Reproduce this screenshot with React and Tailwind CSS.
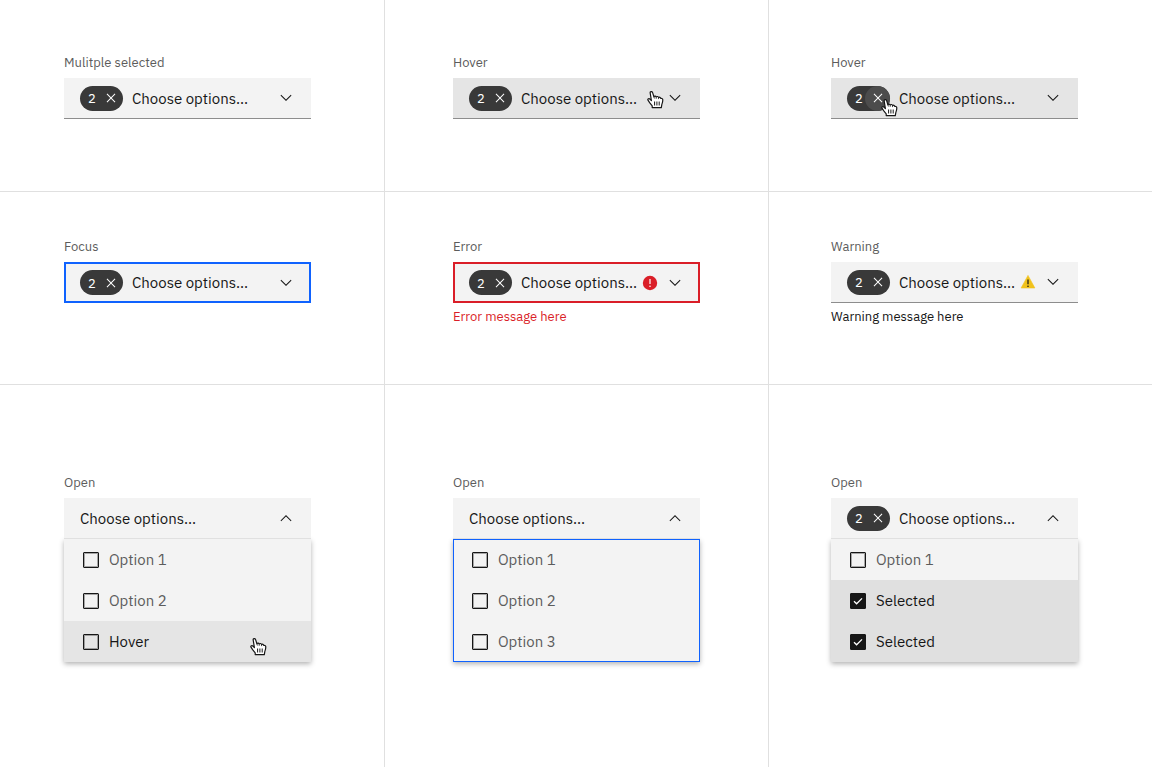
import { useId } from 'react'
import clsx from 'clsx'

const ChevronIcon = ({ up }) => (
  <svg viewBox="0 0 16 16" className={clsx('size-4 shrink-0 fill-[#161616]', up && 'rotate-180')} aria-hidden="true">
    <path d="M8 11 2.5 5.5l.7-.7L8 9.6l4.8-4.8.7.7z" />
  </svg>
)

const CloseIcon = () => (
  <svg viewBox="0 0 16 16" className="size-4 fill-white" aria-hidden="true">
    <path d="M12.4 4.3 11.7 3.6 8 7.3 4.3 3.6l-.7.7L7.3 8l-3.7 3.7.7.7L8 8.7l3.7 3.7.7-.7L8.7 8z" />
  </svg>
)

const ErrorIcon = () => (
  <svg viewBox="0 0 16 16" className="size-4 shrink-0" aria-hidden="true">
    <circle cx="8" cy="8" r="7.2" fill="#da1e28" />
    <path d="M7.4 4h1.2v5H7.4z" fill="#fff" />
    <circle cx="8" cy="11.2" r=".8" fill="#fff" />
  </svg>
)

const WarningIcon = () => (
  <svg viewBox="0 0 16 16" className="size-4 shrink-0" aria-hidden="true">
    <path d="M8 1.4 14.9 14H1.1z" fill="#f1c21b" stroke="#f1c21b" strokeWidth=".6" strokeLinejoin="round" />
    <path d="M7.4 5.6h1.2v4.6H7.4z" fill="#161616" />
    <circle cx="8" cy="12.2" r=".8" fill="#161616" />
  </svg>
)

const HandCursor = ({ className }) => (
  <svg viewBox="0 0 17 19" className={clsx('pointer-events-none absolute z-20 h-[19px] w-[17px]', className)} aria-hidden="true">
    <path
      d="M5.2 17.6v-1.8L2.6 12.6 1 10.2c-.6-1.1.5-2 1.5-1.4l1.9 1.7L3.2 3.2c-.4-1.8 1.8-2.3 2.4-.6l1.3 4.1c.5-.9 1.9-.8 2.3.2.7-.7 2-.5 2.3.5.8-.5 1.9 0 2.2 1 1.3-.4 2.1.4 2.1 1.6 0 2-.5 3.3-1 4.6l-.5 3z"
      fill="#fff" stroke="#161616" strokeWidth="1.2" strokeLinejoin="round"
    />
    <path d="M7.6 11.5v4M9.9 11.5v4M12.2 11.5v4" fill="none" stroke="#161616" strokeWidth="1" />
    <path d="M9.2 7v1.8M11.5 7.6v1.5M6.9 6.7l.5 1.8" fill="none" stroke="#161616" strokeWidth=".8" />
  </svg>
)

function CountTag({ count, closeHover }) {
  return (
    <div className="relative flex h-[25px] w-[43px] shrink-0 items-center justify-between rounded-full bg-[#393939] pl-2 text-[13px] text-white">
      <span className="pt-0.5">{count}</span>
      <button
        type="button"
        aria-label="Clear all selected"
        className={clsx('flex size-[25px] items-center justify-center rounded-full', closeHover && 'bg-[#4c4c4c]')}>
        <CloseIcon />
      </button>
      {closeHover && <HandCursor className="top-3 left-[34px]" />}
    </div>
  )
}

function Option({ label, checked, hover, cursor }) {
  return (
    <label
      className={clsx(
        'relative flex h-[41px] items-center gap-[10px] pl-[19px]',
        checked && 'bg-[#e0e0e0] text-[#161616]',
        hover && 'bg-[#e5e5e5] text-[#161616]',
        !checked && !hover && 'text-[#5c5c5c]'
      )}>
      <span className="relative flex size-4 shrink-0">
        <input
          type="checkbox"
          defaultChecked={checked}
          className="size-4 appearance-none rounded-[1px] border border-[#161616] shadow-[inset_0_0_0_1px_rgba(22,22,22,0.35)] checked:bg-[#161616]"
        />
        {checked && (
          <svg viewBox="0 0 16 16" className="absolute inset-0 size-4" aria-hidden="true">
            <path d="m4 8.2 2.6 2.6 5.4-5.4" fill="none" stroke="#fff" strokeWidth="1.3" />
          </svg>
        )}
      </span>
      <span className="pt-0.5">{label}</span>
      {cursor && <HandCursor className="top-4 right-11" />}
    </label>
  )
}

function MultiSelect({ label, count, hover, closeHover, cursor, status, message, options, menuFocus }) {
  const id = useId()
  const open = Boolean(options)

  return (
    <div className="w-full max-w-[247px] text-[15px]">
      <label htmlFor={id} className="mb-1.5 block text-[13px] leading-[18px] text-[#5c5c5c]">{label}</label>
      <div
        className={clsx(
          'relative flex h-[41px] items-center gap-[9px] pl-4',
          hover ? 'bg-[#e5e5e5]' : 'bg-[#f3f3f3]',
          open && 'border-b border-[#e0e0e0]',
          !open && (!status || status === 'warning') && 'border-b border-[#8d8d8d]',
          status === 'focus' && 'outline-2 -outline-offset-2 outline-[#0f62fe]',
          status === 'error' && 'outline-2 -outline-offset-2 outline-[#da1e28]'
        )}>
        {count && <CountTag count={count} closeHover={closeHover} />}
        <button
          id={id}
          type="button"
          aria-haspopup="listbox"
          aria-expanded={open}
          className="flex h-full min-w-0 flex-1 items-center gap-[9px] pr-[17px] text-left text-[#161616] outline-none">
          <span className="min-w-0 flex-1 pt-0.5 whitespace-nowrap">Choose options...</span>
          {status === 'error' && <ErrorIcon />}
          {status === 'warning' && <WarningIcon />}
          <ChevronIcon up={open} />
        </button>
        {cursor && <HandCursor className="top-3 right-9" />}
      </div>

      {message && (
        <p className={clsx('mt-1.5 text-[13px] leading-4', status === 'error' ? 'text-[#da1e28]' : 'text-[#161616]')}>{message}</p>
      )}

      {open && (
        <div
          className={clsx(
            'bg-[#f3f3f3] shadow-[0_2px_5px_rgba(0,0,0,0.3)]',
            menuFocus && 'border border-[#0f62fe]'
          )}>
          <div className={clsx(menuFocus && '-my-px -ml-px')}>
            {options.map((option, i) => <Option key={i} {...option} />)}
          </div>
        </div>
      )}
    </div>
  )
}

export default function App() {
  return (
    <main className="grid min-h-screen grid-cols-3 grid-rows-[192px_193px_1fr] bg-white font-['IBM_Plex_Sans','Roboto',sans-serif]">
      <section className="border-b border-[#e0e0e0] pt-[54px] pl-16">
        <MultiSelect label="Mulitple selected" count={2} />
      </section>
      <section className="border-b border-l border-[#e0e0e0] pt-[54px] pl-[68px]">
        <MultiSelect label="Hover" count={2} hover cursor />
      </section>
      <section className="border-b border-l border-[#e0e0e0] pt-[54px] pl-[62px]">
        <MultiSelect label="Hover" count={2} hover closeHover />
      </section>

      <section className="border-b border-[#e0e0e0] pt-[46px] pl-16">
        <MultiSelect label="Focus" count={2} status="focus" />
      </section>
      <section className="border-b border-l border-[#e0e0e0] pt-[46px] pl-[68px]">
        <MultiSelect label="Error" count={2} status="error" message="Error message here" />
      </section>
      <section className="border-b border-l border-[#e0e0e0] pt-[46px] pl-[62px]">
        <MultiSelect label="Warning" count={2} status="warning" message="Warning message here" />
      </section>

      <section className="pt-[89px] pl-16">
        <MultiSelect
          label="Open"
          options={[{ label: 'Option 1' }, { label: 'Option 2' }, { label: 'Hover', hover: true, cursor: true }]}
        />
      </section>
      <section className="border-l border-[#e0e0e0] pt-[89px] pl-[68px]">
        <MultiSelect
          label="Open"
          menuFocus
          options={[{ label: 'Option 1' }, { label: 'Option 2' }, { label: 'Option 3' }]}
        />
      </section>
      <section className="border-l border-[#e0e0e0] pt-[89px] pl-[62px]">
        <MultiSelect
          label="Open"
          count={2}
          options={[{ label: 'Option 1' }, { label: 'Selected', checked: true }, { label: 'Selected', checked: true }]}
        />
      </section>
    </main>
  )
}
